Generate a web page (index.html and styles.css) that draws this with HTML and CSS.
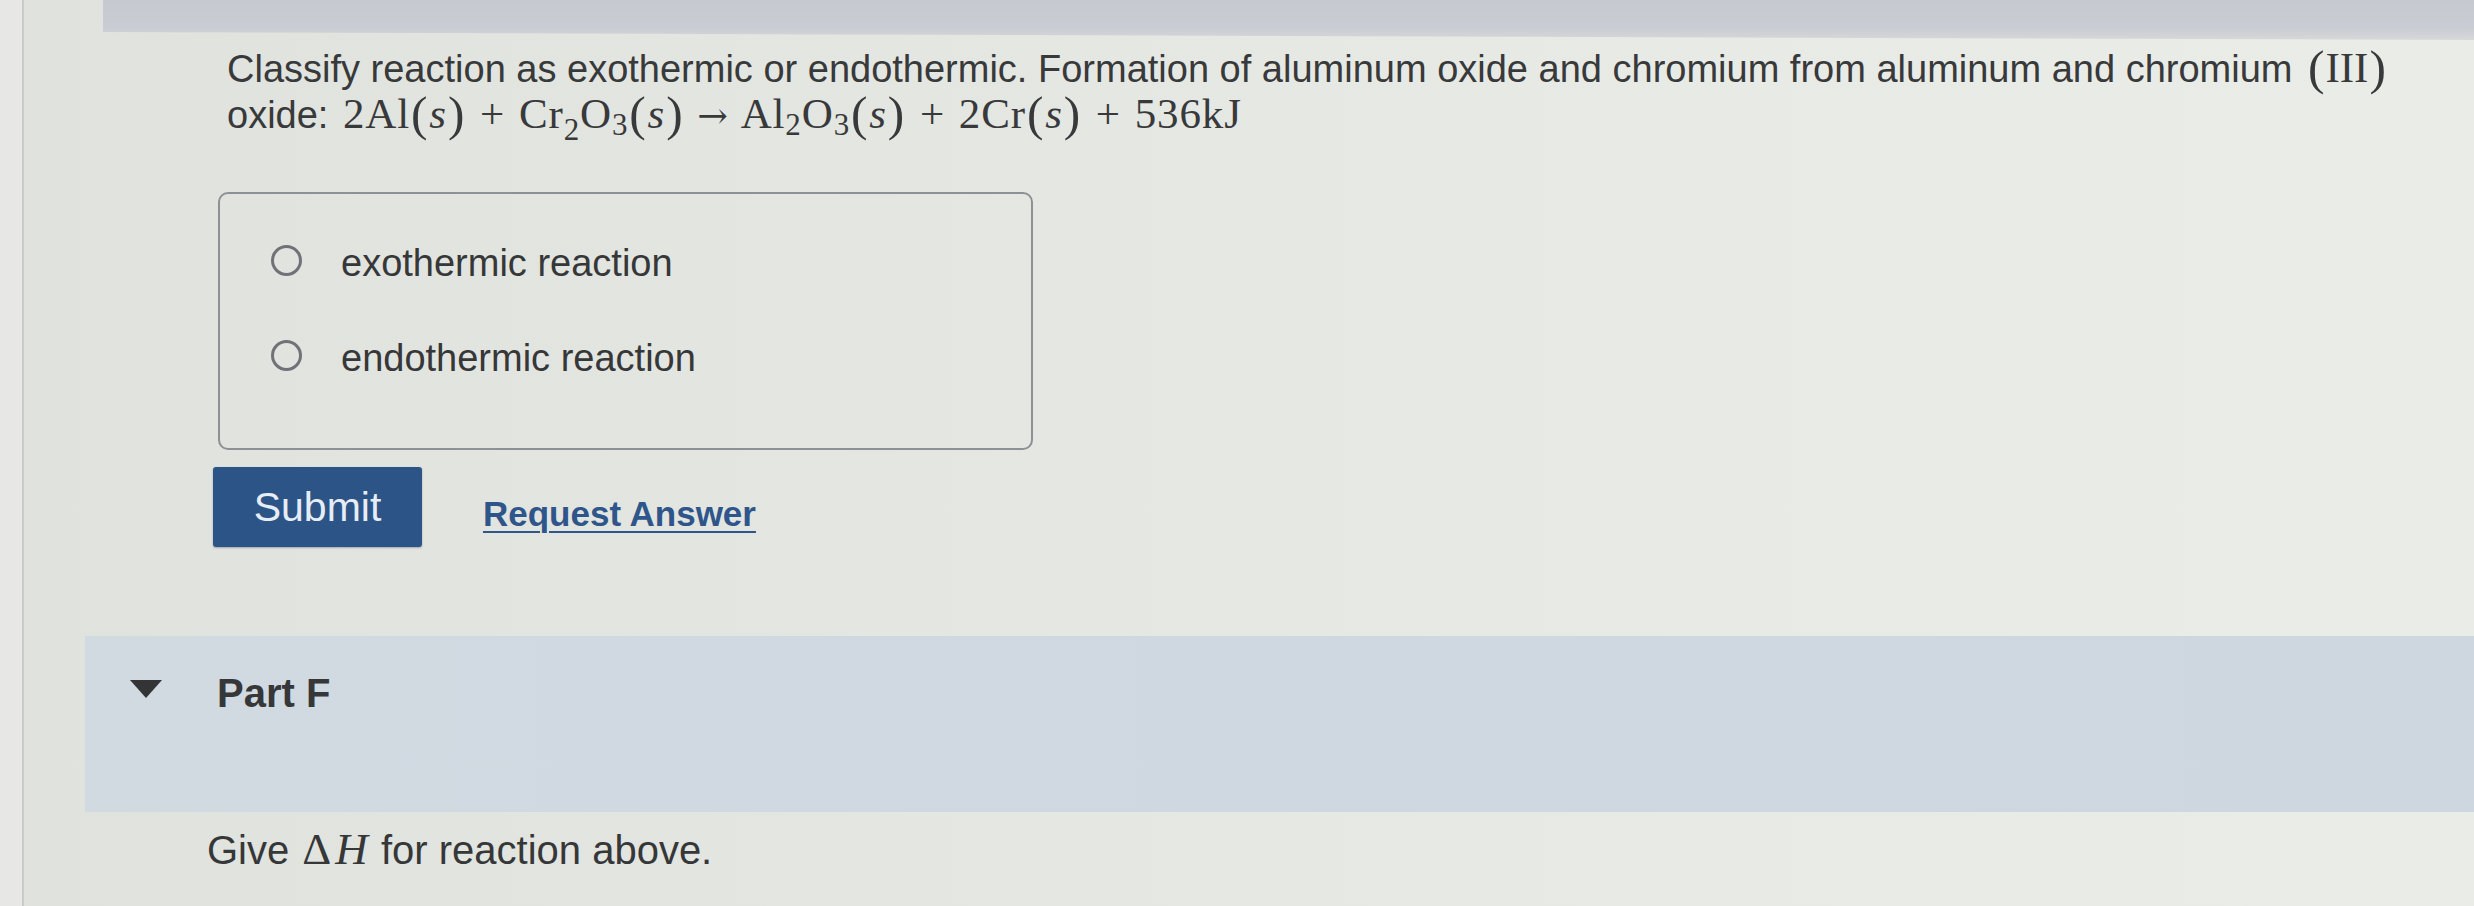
FILE: index.html
```html
<!DOCTYPE html>
<html lang="en">
<head>
<meta charset="utf-8">
<title>Part E</title>
<link rel="stylesheet" href="styles.css">
</head>
<body>
<div class="screen">
  <div class="topbar"></div>
  <main class="content">
    <p class="question">Classify reaction as exothermic or endothermic. Formation of aluminum oxide and chromium from aluminum and chromium <span class="math roman"><span class="p">(</span>III<span class="p">)</span></span> oxide: <span class="math eq">2Al<span class="p">(</span><i>s</i><span class="p">)</span><span class="op">+</span>Cr<sub class="low">2</sub>O<sub>3</sub><span class="p">(</span><i>s</i><span class="p">)</span><span class="op arrow">→</span>Al<sub>2</sub>O<sub>3</sub><span class="p">(</span><i>s</i><span class="p">)</span><span class="op">+</span>2Cr<span class="p">(</span><i>s</i><span class="p">)</span><span class="op">+</span>536kJ</span></p>

    <div class="choices">
      <label class="choice"><span class="radio"></span><span class="choice-text">exothermic reaction</span></label>
      <label class="choice"><span class="radio"></span><span class="choice-text">endothermic reaction</span></label>
    </div>

    <div class="actions">
      <button class="submit" type="button">Submit</button>
      <a class="request" href="#">Request Answer</a>
    </div>
  </main>

  <section class="part">
    <div class="part-head">
      <span class="caret"></span>
      <h2 class="part-title">Part F</h2>
    </div>
  </section>

  <p class="give">Give <span class="math delta">Δ<i>H</i></span> for reaction above.</p>
</div>
</body>
</html>
```

FILE: styles.css
```css
html, body {
  margin: 0;
  padding: 0;
}

body {
  width: 2474px;
  height: 906px;
  overflow: hidden;
  background: linear-gradient(90deg, #e7e8e5 0px, #e7e8e5 22px, #e0e2de 24px, #e4e6e2 900px, #e8eae6 1700px, #eaece8 2474px);
  font-family: "Liberation Sans", Arial, sans-serif;
  color: #363738;
}

.screen {
  margin-left: 22px;
  height: 906px;
  border-left: 2px solid #c9cbc9;
}

.topbar {
  margin-left: 79px;
  height: 40px;
  background: linear-gradient(180deg, #c6c9d0 0%, #c9ccd2 70%, #d6d8d9 100%);
  clip-path: polygon(0 0, 100% 0, 100% 100%, 0 80%);
}

.content {
  padding-left: 192px;
}

.question {
  margin: 6px 0 0 0;
  padding-left: 11px;
  width: 2210px;
  font-size: 38px;
  line-height: 46px;
  color: #38393a;
}

.math {
  font-family: "Liberation Serif", "Times New Roman", serif;
  line-height: 40px;
  white-space: nowrap;
}

.math i {
  font-style: italic;
}

.roman {
  font-size: 43px;
  margin-left: 4px;
}

.eq {
  font-size: 43px;
  letter-spacing: 0.02em;
  margin-left: 4px;
}

.p {
  font-size: 1.15em;
  vertical-align: -0.04em;
  padding: 0 0.02em;
}

.op {
  margin: 0 0.32em;
}

.arrow {
  font-family: "DejaVu Serif", serif;
  font-size: 0.85em;
  margin: 0 0.35em;
  letter-spacing: 0;
}

.eq sub {
  font-size: 0.72em;
  vertical-align: -0.22em;
  line-height: 0;
}

.eq sub.low {
  vertical-align: -0.4em;
}

.choices {
  margin: 54px 0 0 2px;
  width: 811px;
  height: 254px;
  border: 2px solid #8d9196;
  border-radius: 10px;
}

.choice {
  display: flex;
  align-items: center;
  height: 46px;
  padding-left: 51px;
  gap: 39px;
}

.choice:first-child {
  margin-top: 46px;
}

.choice + .choice {
  margin-top: 49px;
}

.radio {
  width: 25px;
  height: 25px;
  border: 3px solid #6f7278;
  border-radius: 50%;
  flex: none;
  margin-top: -6px;
}

.choice-text {
  font-size: 38px;
  line-height: 46px;
  color: #363738;
}

.actions {
  display: flex;
  align-items: center;
  margin: 17px 0 0 -3px;
  gap: 61px;
}

.submit {
  width: 209px;
  height: 80px;
  padding: 0;
  border: none;
  border-radius: 3px;
  background: #2d5486;
  color: #e6edf6;
  font-family: "Liberation Sans", Arial, sans-serif;
  font-size: 41px;
  box-shadow: 0 1px 2px rgba(40, 60, 90, 0.35);
}

.request {
  font-size: 35px;
  font-weight: bold;
  color: #2f568a;
  text-decoration: underline;
  text-underline-offset: 5px;
  text-decoration-thickness: 2px;
  padding-top: 14px;
}

.part {
  margin: 89px 0 0 61px;
  height: 176px;
  background: linear-gradient(90deg, #d1d9e1 0%, #cfd8e0 50%, #ced7e0 100%);
}

.part-head {
  display: flex;
  align-items: flex-start;
  padding: 33px 0 0 45px;
}

.caret {
  width: 0;
  height: 0;
  border-left: 16px solid transparent;
  border-right: 16px solid transparent;
  border-top: 18px solid #333436;
  margin-top: 11px;
  margin-right: 55px;
  flex: none;
}

.part-title {
  margin: 0;
  font-size: 40px;
  line-height: 48px;
  font-weight: bold;
  color: #363739;
}

.give {
  margin: 15px 0 0 183px;
  font-size: 40px;
  line-height: 47px;
  color: #363738;
}

.delta {
  font-size: 45px;
  margin: 0 2px;
}

.delta i {
  margin-left: 4px;
}
```
